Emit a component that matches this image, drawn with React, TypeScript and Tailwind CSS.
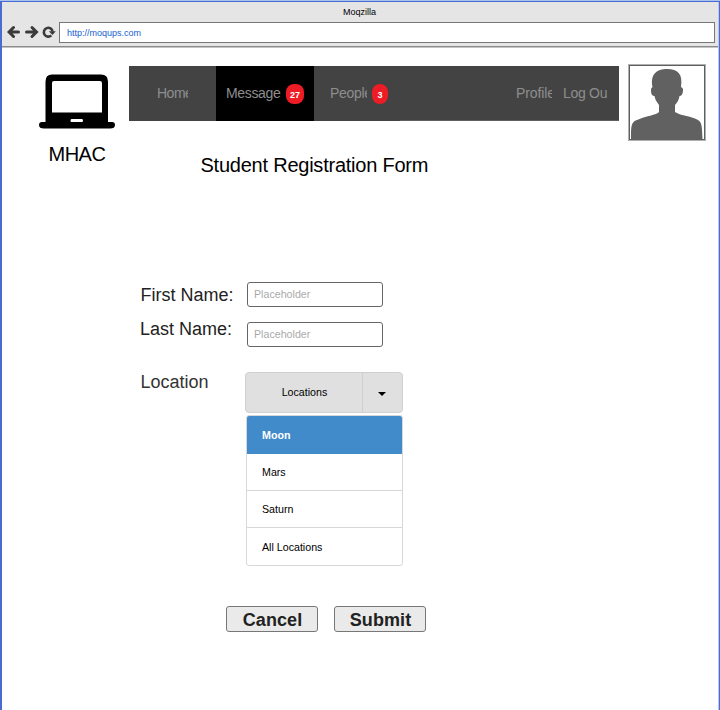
import type { ReactNode } from "react";

function BrowserBar() {
  return (
    <header className="h-[45px] border-b border-[#8c8c8c] bg-[#e5e5e5] shadow-[0_1px_0_#c4c4c4]">
      <div className="h-[20px] pr-[1px] pt-[4px] text-center text-[9px] leading-[12px] text-black">Moqzilla</div>
      <div className="flex h-[20px] pl-[5px]">
        <svg className="mt-[2px] h-[16px] w-[52px]" viewBox="0 0 52 16" fill="none" stroke="#3b3b3b" strokeWidth="3">
          <path d="M6.5 3.5L2 8L6.5 12.5M2.5 8H11.5" strokeLinecap="round" />
          <path d="M25 3.5L29.5 8L25 12.5M19.5 8H29" strokeLinecap="round" />
          <path d="M44.3 11.4A4.4 4.4 0 1 1 45.6 7.6" strokeWidth="2.6" />
          <path d="M41.8 7.2H48.8L45.5 11Z" fill="#3b3b3b" stroke="none" />
        </svg>
        <div className="h-[21px] w-[656px] border border-[#777] bg-white pl-[7px] text-[9px] leading-[20px] text-[#1560d0]">
          http://moqups.com
        </div>
      </div>
    </header>
  );
}

function Badge({ children }: { children: ReactNode }) {
  return (
    <span className="flex h-[20px] items-center justify-center rounded-[8px] bg-[#ee1c25] pt-px text-[9px] font-bold text-white">
      {children}
    </span>
  );
}

function Brand() {
  return (
    <div className="w-[90px] pt-[27px]">
      <svg className="ml-[37px] h-[56px] w-[76px]" viewBox="0 0 76 56">
        <path
          fillRule="evenodd"
          d="M13 0.5H62Q69 0.5 69 7.5V48H73Q76 48 76 51Q76 54.5 71 54.5H5Q0 54.5 0 51Q0 48 3 48H6.5V7.5Q6.5 0.5 13 0.5ZM15 7Q13 7 13 9V38.5H63V9Q63 7 61 7ZM32.5 45Q31.5 45 31.5 46.5T32.5 48H43Q44 48 44 46.5T43 45Z"
        />
      </svg>
      <div className="ml-[46.5px] mt-[12px] text-[20px] leading-[24px] tracking-[-0.5px]">MHAC</div>
    </div>
  );
}

function NavBar() {
  return (
    <nav className="mt-[19px] flex h-[55px] w-[490px] bg-[#434343] text-[14px] leading-[54px] text-[#8e8e8e]">
      <div className="w-[87px] pl-[28px]">
        <div className="w-[31px] overflow-hidden tracking-[-0.5px]">Home</div>
      </div>
      <div className="flex w-[98px] bg-black pl-[10px]">
        <span className="w-[60px] tracking-[-0.35px]">Message</span>
        <div className="mt-[18px] w-[18px]"><Badge>27</Badge></div>
      </div>
      <div className="flex w-[86px] pl-[16px]">
        <span className="w-[37px] overflow-hidden tracking-[-0.3px]">People</span>
        <div className="ml-[5px] mt-[18px] w-[16px]"><Badge>3</Badge></div>
      </div>
      <div className="flex w-[219px] border-b border-[#606060] pl-[116px]">
        <div className="w-[36px] overflow-hidden tracking-[-0.1px]">Profile</div>
        <div className="ml-[11px] w-[46px] whitespace-nowrap tracking-[-0.3px]">Log Ou</div>
      </div>
    </nav>
  );
}

function Avatar() {
  return (
    <div className="ml-[9px] mt-[17px] h-[77px] w-[78px] border border-[#b0b0b0] bg-white">
      <div className="h-[75px] w-[76px] border border-[#5f5f5f]">
        <svg className="h-[73px] w-[74px]" viewBox="0 0 74 73" fill="#616161">
          <path d="M1 73C1 60 1 56 7 54C15 50 27 49 29 46V39C26 35 25 33 24.5 30Q21 30 21 25Q20.5 22 22.5 21C20 8 27 3 37 3C48 3 53 8 51 21Q53.5 22 53 25Q52.5 30 49.5 30C49 34 47 37 45 39V46C51 50 62 50 68 54C72 56 72 61 72.5 73Z" />
        </svg>
      </div>
    </div>
  );
}

function Field({ label, spacing, labelPosition }: { label: string; spacing: string; labelPosition: string }) {
  return (
    <div className={`flex items-start ${spacing}`}>
      <label className={`w-[107px] text-[18px] leading-[24px] text-[#222] ${labelPosition}`}>{label}</label>
      <input
        className="h-[25px] w-[136px] rounded-[3px] border border-[#666] bg-white px-[6px] pb-[2px] text-[10.67px] leading-[20px] placeholder:text-[#aaa]"
        placeholder="Placeholder"
      />
    </div>
  );
}

function LocationPicker() {
  return (
    <div className="w-[158px] text-[10.67px] text-black">
      <button type="button" className="flex h-[41px] w-[158px] rounded-[4px] border border-[#d0d0d0] bg-[#e0e0e0]">
        <span className="w-[117px] border-r border-[#cfcfcf] pl-[1px] text-center leading-[39px]">Locations</span>
        <span className="flex h-[39px] w-[37px] items-center justify-center">
          <svg className="mt-[2px] h-[4px] w-[8px]" viewBox="0 0 8 4"><path d="M0 0H8L4 4Z" /></svg>
        </span>
      </button>
      <ul className="ml-px mt-[2px] h-[151px] w-[157px] overflow-hidden rounded-[3px] border border-[#d8d8d8] leading-[37px]">
        <li className="h-[38px] bg-[#428bca] pl-[15px] pt-px font-bold text-white">Moon</li>
        <li className="h-[37px] border-b border-[#d8d8d8] pl-[15px]">Mars</li>
        <li className="h-[37px] border-b border-[#d8d8d8] pl-[15px]">Saturn</li>
        <li className="h-[37px] pl-[15px] pt-px">All Locations</li>
      </ul>
    </div>
  );
}

function FormButton({ children }: { children: ReactNode }) {
  return (
    <button type="button" className="h-[26px] w-[92px] rounded-[3px] border border-[#777] bg-[#eaeaea] pl-px pt-px text-[18px] font-bold leading-[24px] tracking-[0.1px] text-[#222]">
      {children}
    </button>
  );
}

export default function App() {
  return (
    <div className="h-[710px] w-[720px] overflow-hidden border-t border-[#a9c1f1] bg-white font-['Liberation_Sans',Arial,sans-serif] text-black">
      <div className="h-[709px] border-l-2 border-r border-t border-[#4a6bd0]">
        <div className="h-[708px] border-r border-[#b7c7f5]">
          <BrowserBar />
          <div className="flex h-[123px]">
            <Brand />
            <div className="ml-[37px] w-[490px]">
              <NavBar />
              <h1 className="ml-[71.5px] mt-[32px] whitespace-nowrap text-[20px] leading-[24px] tracking-[-0.23px]">Student Registration Form</h1>
            </div>
            <Avatar />
          </div>
          <form className="ml-[138px] pt-[112px]">
            <Field label="First Name:" spacing="h-[40px]" labelPosition="mt-px pl-[0.5px]" />
            <Field label="Last Name:" spacing="h-[50px]" labelPosition="-mt-[5px]" />
            <div className="flex">
              <div className="w-[105px] pl-[0.5px] text-[18px] leading-[20px] text-[#333]">Location</div>
              <LocationPicker />
            </div>
            <div className="ml-[86px] mt-[40px] flex gap-[16px]">
              <FormButton>Cancel</FormButton>
              <FormButton>Submit</FormButton>
            </div>
          </form>
        </div>
      </div>
    </div>
  );
}
